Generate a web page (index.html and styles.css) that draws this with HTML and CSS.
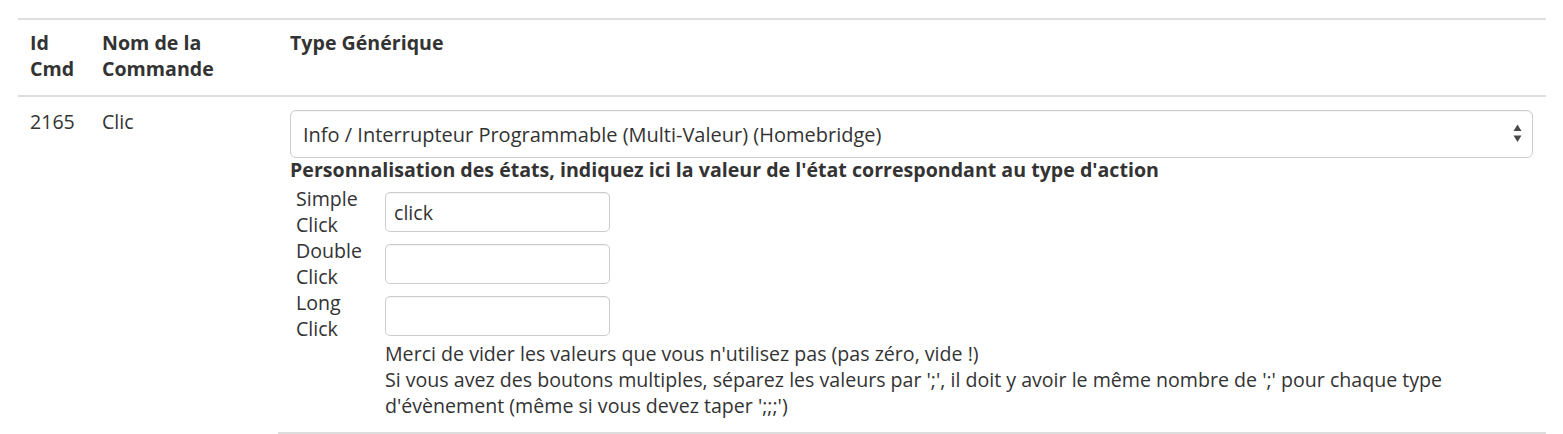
FILE: index.html
```html
<!DOCTYPE html>
<html lang="fr">
<head>
<meta charset="utf-8">
<title>Commandes</title>
<link rel="stylesheet" href="styles.css">
</head>
<body>
<table class="cmd-table">
  <colgroup>
    <col class="col-id">
    <col class="col-name">
    <col class="col-type">
  </colgroup>
  <thead>
    <tr>
      <th>Id<br>Cmd</th>
      <th>Nom de la<br>Commande</th>
      <th>Type Générique</th>
    </tr>
  </thead>
  <tbody>
    <tr>
      <td>2165</td>
      <td>Clic</td>
      <td class="type-cell">
        <div class="select-wrap">
          <select class="generic-select">
            <option>Info / Interrupteur Programmable (Multi-Valeur) (Homebridge)</option>
          </select>
          <svg class="select-arrows" width="9" height="19" viewBox="0 0 9 19" aria-hidden="true">
            <path d="M4.5 0.5 L8.5 7 L0.5 7 Z" fill="#4a4a4a"/>
            <path d="M0.5 11.5 L8.5 11.5 L4.5 18 Z" fill="#4a4a4a"/>
          </svg>
        </div>
        <div class="states-title">Personnalisation des états, indiquez ici la valeur de l'état correspondant au type d'action</div>
        <div class="states-grid">
          <div class="state-label">Simple<br>Click</div>
          <div class="state-field"><input class="state-input" type="text" value="click"></div>
          <div class="state-label">Double<br>Click</div>
          <div class="state-field"><input class="state-input" type="text" value=""></div>
          <div class="state-label">Long<br>Click</div>
          <div class="state-field"><input class="state-input" type="text" value=""></div>
        </div>
        <div class="states-help">
          Merci de vider les valeurs que vous n'utilisez pas (pas zéro, vide !)<br>
          Si vous avez des boutons multiples, séparez les valeurs par ';', il doit y avoir le même nombre de ';' pour chaque type d'évènement (même si vous devez taper ';;;')
        </div>
      </td>
    </tr>
  </tbody>
</table>
</body>
</html>
```

FILE: styles.css
```css
html, body {
  margin: 0;
  padding: 0;
  background: #ffffff;
}

body {
  font-family: "Open Sans", "Noto Sans", sans-serif;
  font-size: 19.6px;
  line-height: 26px;
  color: #333333;
}

.cmd-table {
  margin: 18px 0 0 18px;
  width: 1528px;
  border-collapse: collapse;
  table-layout: fixed;
  border-top: 2px solid #dddddd;
}

.col-id { width: 72px; }
.col-name { width: 188px; }
.col-type { width: 1268px; }

.cmd-table th {
  text-align: left;
  vertical-align: top;
  font-weight: 700;
  padding: 10px 12px 13px 12px;
  border-bottom: 2px solid #dddddd;
}

.cmd-table td {
  vertical-align: top;
  padding: 12px 12px 13px 12px;
}

.cmd-table td.type-cell {
  padding: 13px 13px 13px 12px;
  border-bottom: 2px solid #dddddd;
}

.select-wrap {
  position: relative;
  height: 48px;
}

.generic-select {
  -webkit-appearance: none;
  appearance: none;
  display: block;
  width: 100%;
  height: 48px;
  box-sizing: border-box;
  border: 1px solid #cccccc;
  border-radius: 6px;
  background: #ffffff;
  padding: 0 40px 0 12px;
  font-family: "Open Sans", "Noto Sans", sans-serif;
  font-size: 20px;
  color: #333333;
  box-shadow: inset 0 1px 1px rgba(0,0,0,0.04);
}

.select-arrows {
  position: absolute;
  right: 11px;
  top: 14px;
}

.states-title {
  font-weight: 700;
  margin-top: -1px;
}

.states-grid {
  display: grid;
  grid-template-columns: 95px 225px;
  margin-top: 3px;
}

.state-label {
  padding-left: 6px;
  height: 52px;
}

.state-field {
  display: flex;
  align-items: center;
  height: 52px;
}

.state-input {
  box-sizing: border-box;
  width: 225px;
  height: 40px;
  border: 1px solid #cccccc;
  border-radius: 5px;
  padding: 0 8px;
  font-family: "Open Sans", "Noto Sans", sans-serif;
  font-size: 19.6px;
  color: #333333;
  box-shadow: inset 0 1px 1px rgba(0,0,0,0.06);
}

.states-help {
  padding-left: 95px;
  padding-right: 40px;
  margin-top: -1px;
}
```
